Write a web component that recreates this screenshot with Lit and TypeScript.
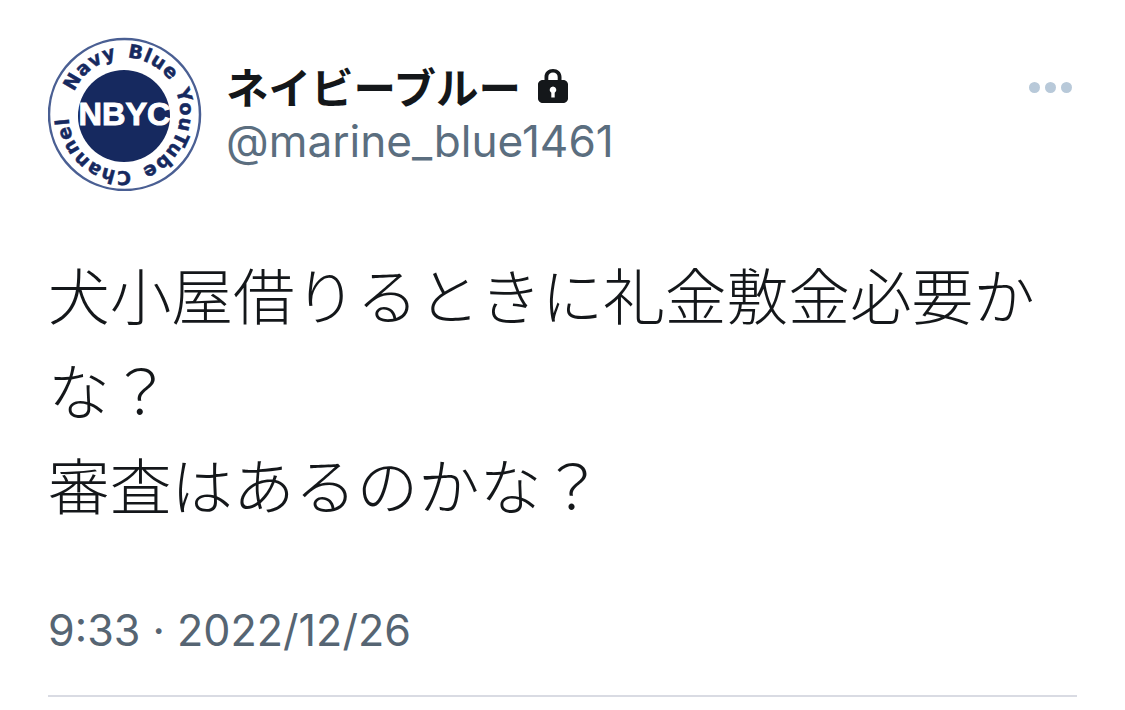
import { LitElement, html, css } from "lit";
import { customElement } from "lit/decorators.js";

@customElement("app-root")
export class AppRoot extends LitElement {
  static styles = css`
    :host {
      display: block;
      width: 1125px;
      height: 710px;
      overflow: hidden;
      background: #fff;
      font-family: Inter, "Noto Sans CJK JP", sans-serif;
      box-sizing: border-box;
    }
    .tweet {
      padding: 37px 48px 0 48px;
      display: flex;
      flex-direction: column;
    }
    .head {
      display: flex;
      align-items: flex-start;
      gap: 24px;
    }
    .avatar {
      width: 154px;
      height: 154px;
      flex: none;
      display: block;
    }
    .who {
      flex: 1;
      display: flex;
      flex-direction: column;
      padding-top: 22px;
    }
    .name-row {
      display: flex;
      align-items: center;
      gap: 16px;
      height: 54px;
    }
    .name {
      font: 700 42.5px/54px "Noto Sans CJK JP", sans-serif;
      color: #14171a;
    }
    .lock {
      width: 32px;
      height: 36px;
      display: block;
    }
    .handle {
      font: 400 44.2px/57px Inter, sans-serif;
      color: #5b6e7f;
    }
    .more {
      display: flex;
      gap: 5px;
      padding: 45px 5px 0 0;
    }
    .more span {
      width: 11px;
      height: 11px;
      border-radius: 50%;
      background: #b8c9d9;
    }
    .body {
      margin: 55px 0 0 0;
      font: 300 61.7px/95px "Noto Sans CJK JP", sans-serif;
      color: #14171a;
    }
    .time {
      margin: 71px 0 0 0;
      font: 400 43.1px/56px Inter, sans-serif;
      color: #566573;
    }
    .rule {
      margin-top: 37px;
      height: 2px;
      background: #d9dbe3;
      width: 1029px;
    }
  `;

  render() {
    return html`
      <div class="tweet">
        <div class="head">
          <svg class="avatar" viewBox="0 0 154 154">
            <defs>
              <path id="ring" d="M26.300 55.100 A55 55 0 1 1 126.700 99.900 A55 55 0 1 1 26.300 55.100"></path>
            </defs>
            <circle cx="76.500" cy="77.500" r="75.500" fill="#fff" stroke="#4a5f93" stroke-width="2.500"></circle>
            <circle cx="76" cy="79" r="46" fill="#16295f"></circle>
            <text font-family="DejaVu Sans, sans-serif" font-weight="700" font-size="19" fill="#16295f" stroke="#16295f" stroke-width="0.5" letter-spacing="0.8" word-spacing="3">
              <textPath href="#ring">Navy Blue YouTube Channel</textPath>
            </text>
            <text x="76.500" y="88" text-anchor="middle" textLength="92" lengthAdjust="spacingAndGlyphs" font-family="Liberation Sans, sans-serif" font-weight="700" font-size="32" fill="#fff" stroke="#fff" stroke-width="1">NBYC</text>
          </svg>
          <div class="who">
            <div class="name-row">
              <span class="name">ネイビーブルー</span>
              <svg class="lock" viewBox="0 0 32 36">
                <path fill="#14171a" fill-rule="evenodd" d="M7.500 12V9C7.500 4.200 11.200 1 16 1s8.500 3.200 8.500 8v3h1.500c2.800 0 5 1.800 5 4.500v14c0 2.700-2.200 4.500-5 4.500H6c-2.800 0-5-1.800-5-4.500v-14C1 13.800 3.200 12 6 12h1.500zm3.800 0h9.400V9c0-2.800-2-4.500-4.700-4.500S11.300 6.200 11.300 9v3zM16 18.500a3.400 3.400 0 0 0-1.700 6.300V29.500h3.400v-4.700A3.400 3.400 0 0 0 16 18.500z"></path>
              </svg>
            </div>
            <div class="handle">@marine_blue1461</div>
          </div>
          <div class="more"><span></span><span></span><span></span></div>
        </div>
        <div class="body">犬小屋借りるときに礼金敷金必要か<br />な？<br />審査はあるのかな？</div>
        <div class="time">9:33 · 2022/12/26</div>
        <div class="rule"></div>
      </div>
    `;
  }
}
